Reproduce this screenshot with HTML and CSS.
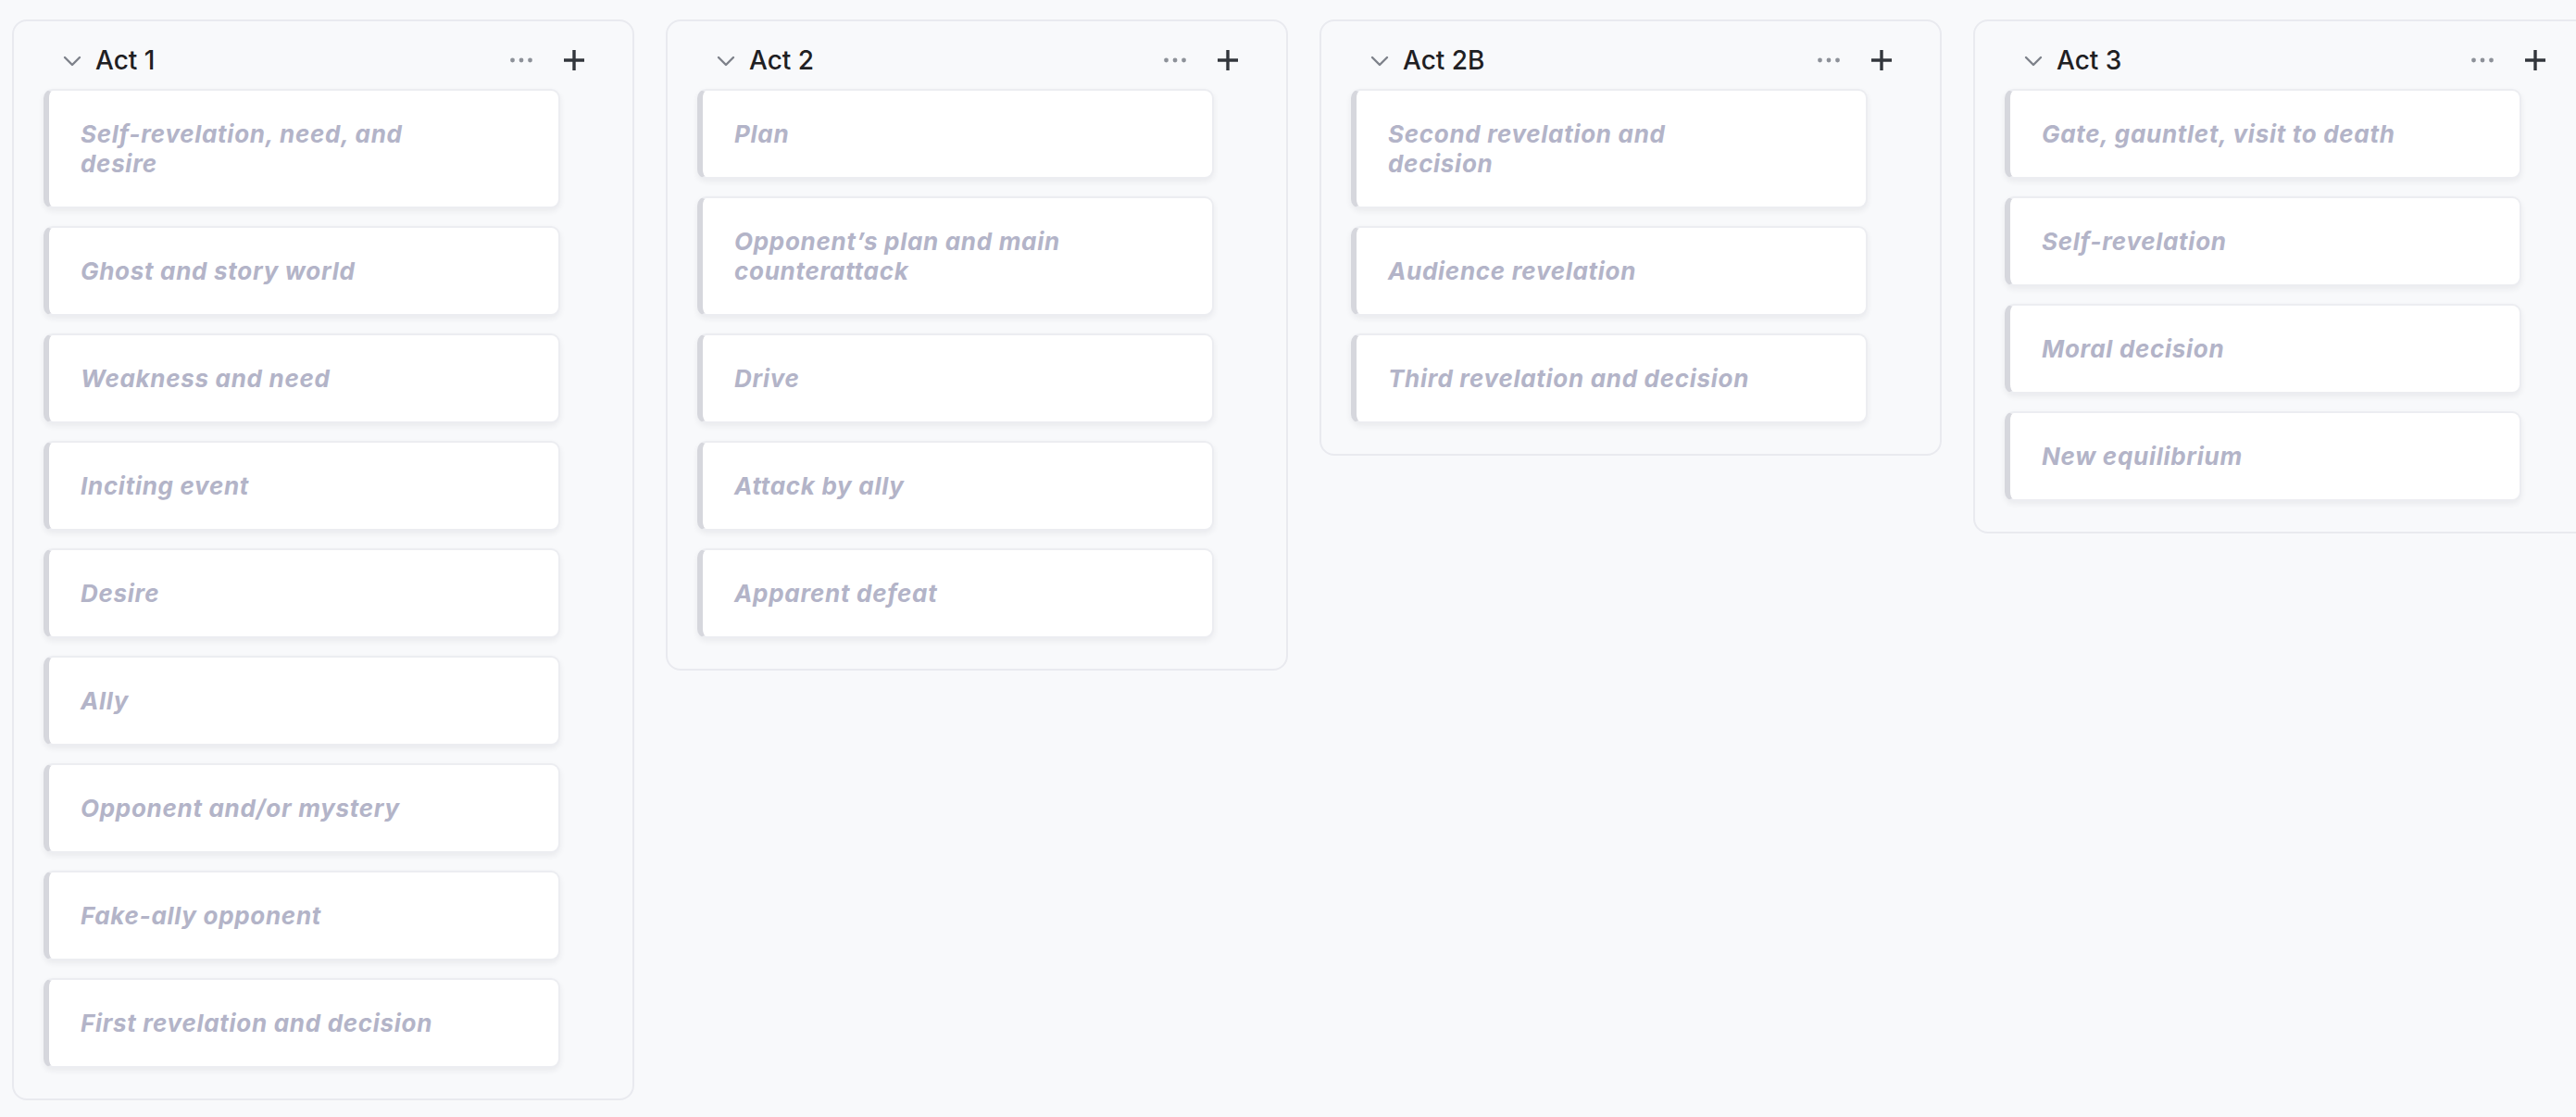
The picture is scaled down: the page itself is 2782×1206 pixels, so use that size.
FILE: index.html
```html
<!DOCTYPE html>
<html lang='en'>

<head>
    <meta charset='UTF-8'>
    <meta name='viewport' content='width=device-width, initial-scale=1.0'>
    <title>Story board</title>
    <link rel="stylesheet" href="styles.css">
</head>

<body>
    <div class="board">
        <!-- Act 1 -->
        <section class="lane">
            <header class="lane-head">
                <svg class="chevron" width="20" height="12" viewBox="0 0 20 12">
                    <path d="M2 2 L10 10 L18 2" />
                </svg>
                <h3 class="lane-title">Act 1</h3>
                <svg class="dots" width="24" height="6" viewBox="0 0 24 6">
                    <circle cx="2.5" cy="3" r="2.4" />
                    <circle cx="12" cy="3" r="2.4" />
                    <circle cx="21.5" cy="3" r="2.4" />
                </svg>
                <svg class="plus" width="22" height="22" viewBox="0 0 22 22">
                    <path d="M11 0 V22 M0 11 H22" />
                </svg>
            </header>
            <div class="cards">
                <div class="card"><p>Self-revelation, need, and desire</p></div>
                <div class="card"><p>Ghost and story world</p></div>
                <div class="card"><p>Weakness and need</p></div>
                <div class="card"><p>Inciting event</p></div>
                <div class="card"><p>Desire</p></div>
                <div class="card"><p>Ally</p></div>
                <div class="card"><p>Opponent and/or mystery</p></div>
                <div class="card"><p>Fake-ally opponent</p></div>
                <div class="card"><p>First revelation and decision</p></div>
            </div>
        </section>

        <!-- Act 2 -->
        <section class="lane">
            <header class="lane-head">
                <svg class="chevron" width="20" height="12" viewBox="0 0 20 12">
                    <path d="M2 2 L10 10 L18 2" />
                </svg>
                <h3 class="lane-title">Act 2</h3>
                <svg class="dots" width="24" height="6" viewBox="0 0 24 6">
                    <circle cx="2.5" cy="3" r="2.4" />
                    <circle cx="12" cy="3" r="2.4" />
                    <circle cx="21.5" cy="3" r="2.4" />
                </svg>
                <svg class="plus" width="22" height="22" viewBox="0 0 22 22">
                    <path d="M11 0 V22 M0 11 H22" />
                </svg>
            </header>
            <div class="cards">
                <div class="card"><p>Plan</p></div>
                <div class="card"><p>Opponent’s plan and main counterattack</p></div>
                <div class="card"><p>Drive</p></div>
                <div class="card"><p>Attack by ally</p></div>
                <div class="card"><p>Apparent defeat</p></div>
            </div>
        </section>

        <!-- Act 2B -->
        <section class="lane">
            <header class="lane-head">
                <svg class="chevron" width="20" height="12" viewBox="0 0 20 12">
                    <path d="M2 2 L10 10 L18 2" />
                </svg>
                <h3 class="lane-title">Act 2B</h3>
                <svg class="dots" width="24" height="6" viewBox="0 0 24 6">
                    <circle cx="2.5" cy="3" r="2.4" />
                    <circle cx="12" cy="3" r="2.4" />
                    <circle cx="21.5" cy="3" r="2.4" />
                </svg>
                <svg class="plus" width="22" height="22" viewBox="0 0 22 22">
                    <path d="M11 0 V22 M0 11 H22" />
                </svg>
            </header>
            <div class="cards">
                <div class="card"><p>Second revelation and decision</p></div>
                <div class="card"><p>Audience revelation</p></div>
                <div class="card"><p>Third revelation and decision</p></div>
            </div>
        </section>

        <!-- Act 3 -->
        <section class="lane">
            <header class="lane-head">
                <svg class="chevron" width="20" height="12" viewBox="0 0 20 12">
                    <path d="M2 2 L10 10 L18 2" />
                </svg>
                <h3 class="lane-title">Act 3</h3>
                <svg class="dots" width="24" height="6" viewBox="0 0 24 6">
                    <circle cx="2.5" cy="3" r="2.4" />
                    <circle cx="12" cy="3" r="2.4" />
                    <circle cx="21.5" cy="3" r="2.4" />
                </svg>
                <svg class="plus" width="22" height="22" viewBox="0 0 22 22">
                    <path d="M11 0 V22 M0 11 H22" />
                </svg>
            </header>
            <div class="cards">
                <div class="card"><p>Gate, gauntlet, visit to death</p></div>
                <div class="card"><p>Self-revelation</p></div>
                <div class="card"><p>Moral decision</p></div>
                <div class="card"><p>New equilibrium</p></div>
            </div>
        </section>
    </div>
</body>

</html>
```

FILE: styles.css
```css
html,
body {
    padding: 0;
    margin: 0;
}

body {
    background: #f8f9fb;
    font-family: Inter, "Noto Sans", sans-serif;
    overflow: hidden;
    height: 100vh;
}

.board {
    display: flex;
    align-items: flex-start;
    gap: 34px;
    padding: 21px 0 0 13px;
}

.lane {
    flex: 0 0 auto;
    box-sizing: border-box;
    width: 672px;
    background: #f8f9fb;
    border: 2px solid #e9eaef;
    border-radius: 16px;
    padding: 25px 0 33px 32px;
}

.lane-head {
    display: flex;
    align-items: center;
    height: 34px;
    margin: 0 52px 14px 21px;
}

.chevron {
    fill: none;
    stroke: #7d818a;
    stroke-width: 2.4;
    stroke-linecap: round;
    stroke-linejoin: round;
    margin-top: 2px;
}

.lane-title {
    flex: 1;
    margin: 0 0 0 15px;
    font-size: 28px;
    line-height: 34px;
    font-weight: 500;
    color: #1f2023;
}

.dots {
    fill: #8d9199;
    margin-right: 34px;
}

.plus {
    stroke: #32363c;
    stroke-width: 3.4;
}

.cards {
    display: flex;
    flex-direction: column;
    gap: 19px;
}

.card {
    box-sizing: border-box;
    width: 558px;
    background: #fff;
    border: 2px solid #ecedf1;
    border-left: 6px solid #d6d7dd;
    border-radius: 10px;
    padding: 31px 34px 30px;
    box-shadow: 0 3px 6px rgba(40, 44, 60, 0.07);
}

.card p {
    margin: 0;
    max-width: 400px;
    font-size: 26px;
    line-height: 32px;
    font-style: italic;
    font-weight: 700;
    letter-spacing: 0.7px;
    color: #b3b4c8;
}
```
